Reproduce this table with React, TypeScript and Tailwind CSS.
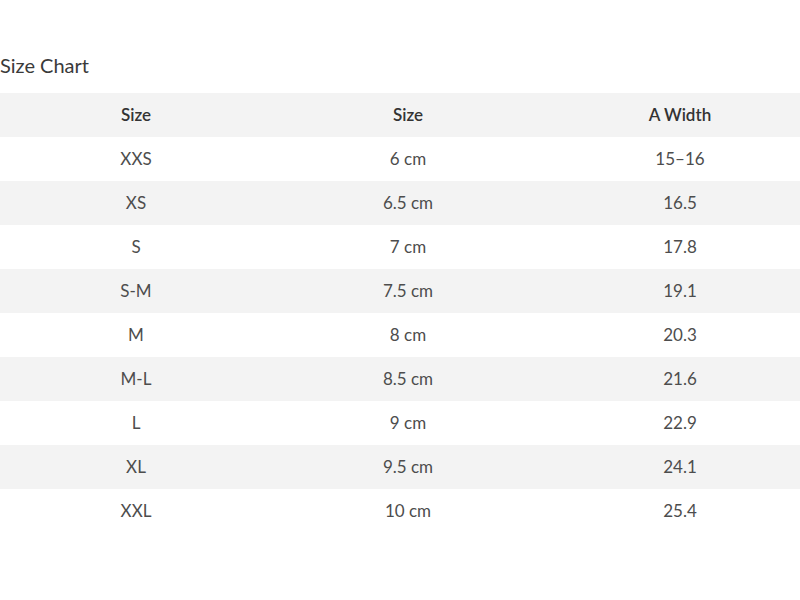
const rows = [
  ["XXS", "6 cm", "15–16"],
  ["XS", "6.5 cm", "16.5"],
  ["S", "7 cm", "17.8"],
  ["S-M", "7.5 cm", "19.1"],
  ["M", "8 cm", "20.3"],
  ["M-L", "8.5 cm", "21.6"],
  ["L", "9 cm", "22.9"],
  ["XL", "9.5 cm", "24.1"],
  ["XXL", "10 cm", "25.4"],
];

export default function App() {
  return (
    <div className="w-[800px] h-[600px] overflow-hidden bg-white font-['Lato',sans-serif] text-[#4d4d4d]">
      <div className="pt-[52px] text-[20px] leading-[26px] text-[#3a3a3a]">Size Chart</div>
      <table className="mt-[15px] w-[816px] table-fixed border-collapse text-[17px]">
        <thead>
          <tr className="bg-[#f3f3f3] h-[44px]">
            <th className="font-semibold text-[#333]">Size</th>
            <th className="font-semibold text-[#333]">Size</th>
            <th className="font-semibold text-[#333]">A Width</th>
          </tr>
        </thead>
        <tbody>
          {rows.map((r, i) => (
            <tr key={r[0]} className={i % 2 === 1 ? "bg-[#f3f3f3] h-[44px]" : "bg-white h-[44px]"}>
              {r.map((c, j) => (
                <td key={j} className="text-center">
                  {c}
                </td>
              ))}
            </tr>
          ))}
        </tbody>
      </table>
    </div>
  );
}
